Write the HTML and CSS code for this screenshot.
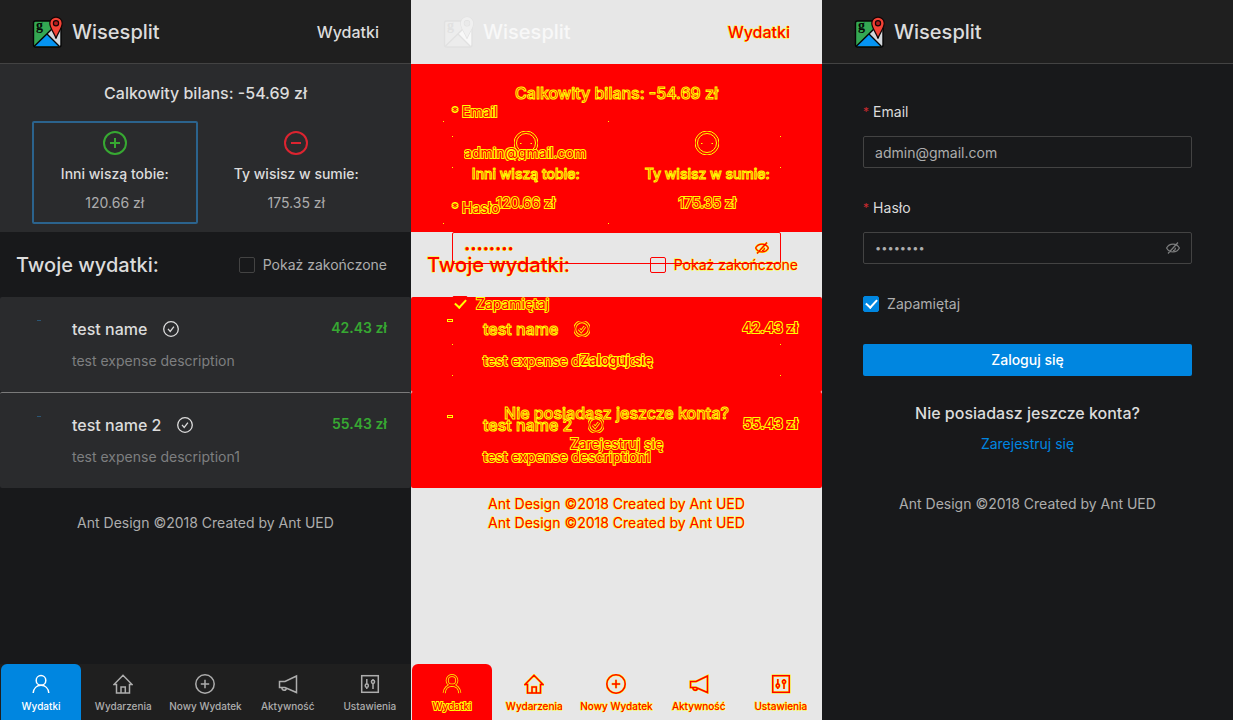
FILE: index.html
```
<!DOCTYPE html>
<html lang="pl">
<head>
<meta charset="utf-8">
<meta name="viewport" content="width=device-width, initial-scale=1">
<title>Wisesplit</title>
<link rel="stylesheet" href="styles.css">
</head>
<body>
<svg class="sprite" aria-hidden="true">
  <symbol id="i-plus" viewBox="0 0 24 24"><circle cx="12" cy="12" r="11"/><path d="M7 12h10M12 7v10"/></symbol>
  <symbol id="i-minus" viewBox="0 0 24 24"><circle cx="12" cy="12" r="11"/><path d="M7 12h10"/></symbol>
  <symbol id="i-ring" viewBox="0 0 24 24"><circle cx="12" cy="12" r="12"/><circle cx="12" cy="12" r="9.500"/><path d="M6 12.500h1.500M16.500 12.500H18"/></symbol>
  <symbol id="i-check" viewBox="0 0 16 16"><circle cx="8" cy="8" r="7.3"/><path d="M5 7.900l2.200 2.500 3.700-4.800"/></symbol>
  <symbol id="i-user" viewBox="0 0 20 20"><circle cx="10" cy="6.400" r="4.800"/><path d="M2.200 19c.4-4.600 3.600-7.700 7.800-7.700s7.400 3.100 7.800 7.700"/></symbol>
  <symbol id="i-home" viewBox="0 0 20 20"><path d="M3.500 10.500H1L10 1.300l9 9.200h-2.500V19h-13zM8 19v-6h4.300v6"/></symbol>
  <symbol id="i-add" viewBox="0 0 20 20"><circle cx="10" cy="10" r="9.200"/><path d="M5.800 10h8.400M10 5.800v8.400"/></symbol>
  <symbol id="i-horn" viewBox="0 0 20 20"><path d="M18.500 2v16.500L7 13.500H1.500V7.500H7zM3.800 13.500c.2 3.600 4.400 3.400 4.600.6"/></symbol>
  <symbol id="i-control" viewBox="0 0 20 20"><rect x="1.700" y="1.700" width="16.600" height="16.600"/><path d="M6.800 5v5M6.800 13.500V15M13 5v1.500M13 9.500V15"/><circle cx="6.800" cy="11.700" r="1.600"/><circle cx="13" cy="7.800" r="1.600"/></symbol>
  <symbol id="i-eye" viewBox="0 0 14 14"><path d="M.6 7C3.200 1.800 10.800 1.800 13.400 7 10.800 12.200 3.200 12.200.6 7zM2 12.500L12 1.500M5.200 8.800l3.600-4M7 9.500c1.500 0 2.500-1 2.400-2.700"/></symbol>
  <symbol id="i-logo" viewBox="0 0 32 32">
    <rect class="map-land" x="1.500" y="5" width="27.500" height="26" rx="2"/>
    <path class="map-grey" d="M15 18l8-8h6v19.500L27.500 31z"/>
    <path class="map-water" d="M2 30.500L15 18l12.500 12.500z"/>
    <path class="map-line" d="M2 30.500L21.500 11.500M15 18l12.500 12.500"/>
    <rect class="map-line" x="1.500" y="5" width="27.500" height="26" rx="2"/>
    <path class="map-pin" d="M24 22.500C22.800 17.500 17.800 12.500 17.800 7.300a6.200 6.200 0 0 1 12.400 0c0 5.200-5 10.200-6.200 15.200z"/>
    <circle class="map-hole" cx="24" cy="7.300" r="2.600"/>
    <text class="map-g" x="4" y="14">g</text>
  </symbol>
</svg>
<main class="screens">

  <section class="screen">
    <header class="top">
      <svg class="logo"><use href="#i-logo"/></svg>
      <span class="brand">Wisesplit</span>
      <a class="crumb" href="#">Wydatki</a>
    </header>
    <div class="stack">
      <div class="layer">
        <section class="summary">
          <h2 class="balance">Calkowity bilans: -54.69 zł</h2>
          <div class="cards">
            <button class="card card-on" type="button">
              <svg class="icon24 green"><use href="#i-plus"/></svg>
              <span class="card-label">Inni wiszą tobie:</span>
              <span class="card-value">120.66 zł</span>
            </button>
            <button class="card" type="button">
              <svg class="icon24 red"><use href="#i-minus"/></svg>
              <span class="card-label">Ty wisisz w sumie:</span>
              <span class="card-value">175.35 zł</span>
            </button>
          </div>
        </section>
        <div class="bar">
          <h1 class="title">Twoje wydatki:</h1>
          <label class="check"><input type="checkbox"><span>Pokaż zakończone</span></label>
        </div>
        <ul class="list">
          <li class="item">
            <span class="avatar"></span>
            <div class="item-text">
              <h3 class="name">test name <svg class="icon16"><use href="#i-check"/></svg></h3>
              <p class="desc">test expense description</p>
            </div>
            <span class="amount">42.43 zł</span>
          </li>
          <li class="item">
            <span class="avatar"></span>
            <div class="item-text">
              <h3 class="name">test name 2 <svg class="icon16"><use href="#i-check"/></svg></h3>
              <p class="desc">test expense description1</p>
            </div>
            <span class="amount">55.43 zł</span>
          </li>
        </ul>
        <footer class="foot">Ant Design ©2018 Created by Ant UED</footer>
      </div>
    </div>
    <nav class="tabs">
      <a class="tab tab-on" href="#"><svg class="icon20"><use href="#i-user"/></svg>Wydatki</a>
      <a class="tab" href="#"><svg class="icon20"><use href="#i-home"/></svg>Wydarzenia</a>
      <a class="tab" href="#"><svg class="icon20"><use href="#i-add"/></svg>Nowy Wydatek</a>
      <a class="tab" href="#"><svg class="icon20"><use href="#i-horn"/></svg>Aktywność</a>
      <a class="tab" href="#"><svg class="icon20"><use href="#i-control"/></svg>Ustawienia</a>
    </nav>
  </section>

  <section class="screen diff">
    <header class="top">
      <svg class="logo"><use href="#i-logo"/></svg>
      <span class="brand">Wisesplit</span>
      <a class="crumb" href="#">Wydatki</a>
    </header>
    <div class="stack">
      <div class="layer">
        <section class="summary">
          <h2 class="balance">Calkowity bilans: -54.69 zł</h2>
          <div class="cards">
            <button class="card corners" type="button">
              <svg class="icon24"><use href="#i-ring"/></svg>
              <span class="card-label">Inni wiszą tobie:</span>
              <span class="card-value">120.66 zł</span>
            </button>
            <button class="card" type="button">
              <svg class="icon24"><use href="#i-ring"/></svg>
              <span class="card-label">Ty wisisz w sumie:</span>
              <span class="card-value">175.35 zł</span>
            </button>
          </div>
        </section>
        <div class="bar">
          <h1 class="title">Twoje wydatki:</h1>
          <label class="check"><input type="checkbox"><span>Pokaż zakończone</span></label>
        </div>
        <ul class="list">
          <li class="item">
            <span class="avatar"></span>
            <div class="item-text">
              <h3 class="name">test name <svg class="icon16"><use class="halo" href="#i-check"/><use href="#i-check"/></svg></h3>
              <p class="desc">test expense description</p>
            </div>
            <span class="amount">42.43 zł</span>
          </li>
          <li class="item">
            <span class="avatar"></span>
            <div class="item-text">
              <h3 class="name">test name 2 <svg class="icon16"><use class="halo" href="#i-check"/><use href="#i-check"/></svg></h3>
              <p class="desc">test expense description1</p>
            </div>
            <span class="amount">55.43 zł</span>
          </li>
        </ul>
        <footer class="foot">Ant Design ©2018 Created by Ant UED</footer>
      </div>
      <div class="layer">
        <form class="login">
          <div class="field">
            <label class="label" for="email-diff">Email</label>
            <input class="input corners" id="email-diff" type="email" value="admin@gmail.com">
          </div>
          <div class="field">
            <label class="label" for="pass-diff">Hasło</label>
            <div class="input secret">
              <input class="bare" id="pass-diff" type="password" value="password">
              <button class="eye" type="button" aria-label="Pokaż hasło"><svg class="icon14"><use class="halo" href="#i-eye"/><use href="#i-eye"/></svg></button>
            </div>
          </div>
          <label class="check remember"><input type="checkbox" checked><span>Zapamiętaj</span></label>
          <button class="submit corners" type="button">Zaloguj się</button>
          <div class="signup">
            <h2 class="ask">Nie posiadasz jeszcze konta?</h2>
            <a class="link" href="#">Zarejestruj się</a>
          </div>
        </form>
        <footer class="foot">Ant Design ©2018 Created by Ant UED</footer>
      </div>
    </div>
    <nav class="tabs">
      <a class="tab tab-on" href="#"><svg class="icon20"><use class="halo" href="#i-user"/><use href="#i-user"/></svg>Wydatki</a>
      <a class="tab" href="#"><svg class="icon20"><use class="halo" href="#i-home"/><use href="#i-home"/></svg>Wydarzenia</a>
      <a class="tab" href="#"><svg class="icon20"><use class="halo" href="#i-add"/><use href="#i-add"/></svg>Nowy Wydatek</a>
      <a class="tab" href="#"><svg class="icon20"><use class="halo" href="#i-horn"/><use href="#i-horn"/></svg>Aktywność</a>
      <a class="tab" href="#"><svg class="icon20"><use class="halo" href="#i-control"/><use href="#i-control"/></svg>Ustawienia</a>
    </nav>
  </section>

  <section class="screen">
    <header class="top">
      <svg class="logo"><use href="#i-logo"/></svg>
      <span class="brand">Wisesplit</span>
    </header>
    <div class="stack">
      <div class="layer">
        <form class="login">
          <div class="field">
            <label class="label" for="email">Email</label>
            <input class="input" id="email" type="email" value="admin@gmail.com">
          </div>
          <div class="field">
            <label class="label" for="pass">Hasło</label>
            <div class="input secret">
              <input class="bare" id="pass" type="password" value="password">
              <button class="eye" type="button" aria-label="Pokaż hasło"><svg class="icon14"><use href="#i-eye"/></svg></button>
            </div>
          </div>
          <label class="check remember"><input type="checkbox" checked><span>Zapamiętaj</span></label>
          <button class="submit" type="button">Zaloguj się</button>
          <div class="signup">
            <h2 class="ask">Nie posiadasz jeszcze konta?</h2>
            <a class="link" href="#">Zarejestruj się</a>
          </div>
        </form>
        <footer class="foot">Ant Design ©2018 Created by Ant UED</footer>
      </div>
    </div>
  </section>

</main>
</body>
</html>
```

FILE: styles.css
```
* { box-sizing: border-box; }

body {
  margin: 0;
  background: #18191b;
  color: #adadad;
  font: 14px/22px Inter, "Liberation Sans", sans-serif;
}

h1, h2, h3, p, ul { margin: 0; padding: 0; font-size: inherit; }
ul { list-style: none; }
a { color: inherit; text-decoration: none; }
button, input { font: inherit; color: inherit; }

.sprite { display: none; }

.screens {
  display: grid;
  grid-template-columns: repeat(3, minmax(0, 1fr));
  min-height: 100vh;
}

.screen { display: flex; flex-direction: column; background: #18191b; }
.stack { display: grid; flex: 1; align-items: start; }
.layer { grid-area: 1 / 1; min-width: 0; }

/* header */
.top {
  display: flex;
  align-items: center;
  height: 64px;
  padding: 1px 32px 0;
  background: #1f1f1f;
  border-bottom: 1px solid #434343;
  color: #dcdcdc;
  font-weight: 550;
}
.logo { width: 32px; height: 32px; margin-right: 8px; }
.brand { font-size: 20px; }
.crumb { margin-left: auto; font-size: 16px; }

.map-land { fill: var(--land, #34a853); }
.map-grey { fill: var(--grey, #d3d8dc); }
.map-water { fill: var(--water, #0594f2); }
.map-line { fill: none; stroke: var(--line, #050505); stroke-width: 1.4; }
.map-pin { fill: var(--pin, #f44336); stroke: var(--line, #120505); stroke-width: 1.2; }
.map-hole { fill: var(--hole, #b71c1c); stroke: var(--line, #120505); stroke-width: 1.2; }
.map-g { font: bold 14px "Liberation Serif", serif; fill: var(--line, #050505); }

/* icons */
.icon24, .icon20, .icon16, .icon14 {
  flex: none;
  fill: none;
  stroke: currentColor;
  stroke-width: 1.5;
  overflow: visible;
}
.icon24 { width: 24px; height: 24px; stroke-width: 2; }
.icon20 { width: 20px; height: 20px; }
.icon16 { width: 16px; height: 16px; stroke-width: 1.3; }
.icon14 { width: 14px; height: 14px; stroke-width: 1.2; display: block; }
.green { color: #37a832; }
.red { color: #dc2430; }

/* balance */
.summary { padding: 16px 32px 8px; background: #2a2b2d; }
.balance {
  margin-bottom: 15px;
  color: #dcdcdc;
  font-size: 16px;
  line-height: 26px;
  font-weight: 550;
  text-align: center;
}
.cards { display: grid; grid-template-columns: 1fr 1fr; gap: 16px; }
.card {
  display: flex;
  flex-direction: column;
  align-items: center;
  padding: 8px 0;
  border: 2px solid transparent;
  border-radius: 2px;
  background: none;
}
.card-on { border-color: #2b638d; }
.card-label { margin: 8px 0 7px; color: #dcdcdc; font-weight: 550; }

/* list */
.bar {
  display: flex;
  align-items: center;
  justify-content: space-between;
  height: 65px;
  padding: 0 24px 0 16px;
}
.title { color: #dcdcdc; font-size: 20px; font-weight: 500; }

.check { display: flex; align-items: center; gap: 8px; }
.check input {
  appearance: none;
  width: 16px;
  height: 16px;
  margin: 0;
  border: 1px solid #434343;
  border-radius: 2px;
}
.check input:checked {
  display: grid;
  place-items: center;
  border-color: #0086e0;
  background: #0086e0;
  color: #fff;
}
.check input:checked::before {
  content: "";
  width: 9px;
  height: 5px;
  margin-bottom: 3px;
  border: solid currentColor;
  border-width: 0 0 2px 2px;
  transform: rotate(-47deg);
}

.item {
  display: flex;
  padding: 20px 24px 20px 16px;
  border-radius: 2px;
  background: #2a2b2d;
}
.item + .item { border-top: 1px solid #7a7a7a; }
.avatar { flex: none; width: 4px; height: 1px; margin: 3px 31px 0 21px; background: #2b5675; }
.item-text { flex: 1; }
.name {
  display: flex;
  align-items: center;
  gap: 16px;
  margin-bottom: 9px;
  color: #dcdcdc;
  font-size: 16px;
  line-height: 24px;
  font-weight: 550;
}
.desc { color: #7e7f80; }
.amount { color: #37a832; font-weight: 600; }
.foot { padding: 24px 16px; text-align: center; }

/* bottom navigation */
.tabs {
  display: grid;
  grid-template-columns: repeat(5, minmax(0, 1fr));
  background: #1f1f1f;
}
.tab {
  display: flex;
  flex-direction: column;
  align-items: center;
  gap: 4px;
  margin: 0 1px;
  padding: 10px 0 6px;
  font-size: 10px;
  line-height: 16px;
  font-weight: 500;
  white-space: nowrap;
}
.tab-on { border-radius: 6px 6px 0 0; background: #0086e0; color: #fff; }

/* login */
.login {
  display: flex;
  flex-direction: column;
  gap: 24px;
  padding: 32px 10% 14px;
}
.field { display: flex; flex-direction: column; gap: 8px; }
.label { display: flex; align-items: center; height: 32px; color: #dcdcdc; }
.label::before { content: "*"; margin-right: 4px; color: #c92a2f; font-size: 12px; }
.input {
  width: 100%;
  height: 32px;
  padding: 0 11px;
  border: 1px solid #434343;
  border-radius: 2px;
  background: none;
}
.secret { display: flex; align-items: center; }
.bare { flex: 1; min-width: 0; padding: 0; border: 0; background: none; font-size: 11px; }
.eye { padding: 0; border: 0; background: none; color: #7c7d7e; }
.remember { height: 32px; }
.submit {
  height: 32px;
  border: 0;
  border-radius: 2px;
  background: #0086e0;
  color: #fff;
  font-weight: 500;
}
.signup { display: flex; flex-direction: column; align-items: center; gap: 7px; }
.ask { color: #dcdcdc; font-size: 16px; line-height: 26px; font-weight: 550; }
.link { color: #0086e0; }

/* comparison screen: changed areas red, edges yellow */
.diff {
  background: #e7e7e7;
  color: #f00;
  -webkit-text-stroke: 1px #ff0;
  paint-order: stroke fill;
}
.diff .top { background: #e7e7e7; border-color: #e7e7e7; color: #f00; }
.diff .brand { color: #f8f8f8; -webkit-text-stroke: 0; }
.diff .logo {
  --land: #ededed;
  --grey: #f8f8f8;
  --water: #ececec;
  --line: #e1e1e1;
  --pin: #f0f0f0;
  --hole: #eaeaea;
  -webkit-text-stroke: 0;
}
.diff .summary, .diff .item, .diff .tab-on { background: #f00; }
.diff .item + .item { border-color: #f00; }
.diff .tabs { background: none; }
.diff :is(.balance, .card-label, .name, .desc, .amount, .title, .label, .ask, .link, .submit, .eye, .tab) { color: #f00; }
.diff :is(button, input) { -webkit-text-stroke: inherit; }
.diff :is(.balance, .name, .card-label, .ask) { paint-order: normal; }
.diff :is(.card-value, .desc, .amount, .label, .input, .remember, .submit, .link, .tab-on) {
  -webkit-text-stroke: 2px #ff0;
}
.diff .label::before { color: #f00; }
.diff .card, .diff .input { border-color: transparent; }
.diff .secret { border-color: #f00; -webkit-text-stroke: 1px #ff0; }
.diff .check input { border-color: #f00; }
.diff .check input:checked { background: #f00; color: #ff0; }
.diff .avatar { background: #f00; outline: 1px solid #ff0; }
.diff .submit { background-color: transparent; }
.diff .halo { stroke: #ff0; stroke-width: 2.4; }
.diff .icon24 { stroke: #ff0; stroke-width: 1; }
.diff .icon16 .halo, .diff .tab-on .halo { stroke-width: 3; }

.diff .corners {
  background-image:
    linear-gradient(#ff0, #ff0), linear-gradient(#ff0, #ff0),
    linear-gradient(#ff0, #ff0), linear-gradient(#ff0, #ff0);
  background-origin: border-box;
  background-position: 0 0, 100% 0, 0 100%, 100% 100%;
  background-repeat: no-repeat;
  background-size: 1px 1px;
  border-radius: 0;
}
```
